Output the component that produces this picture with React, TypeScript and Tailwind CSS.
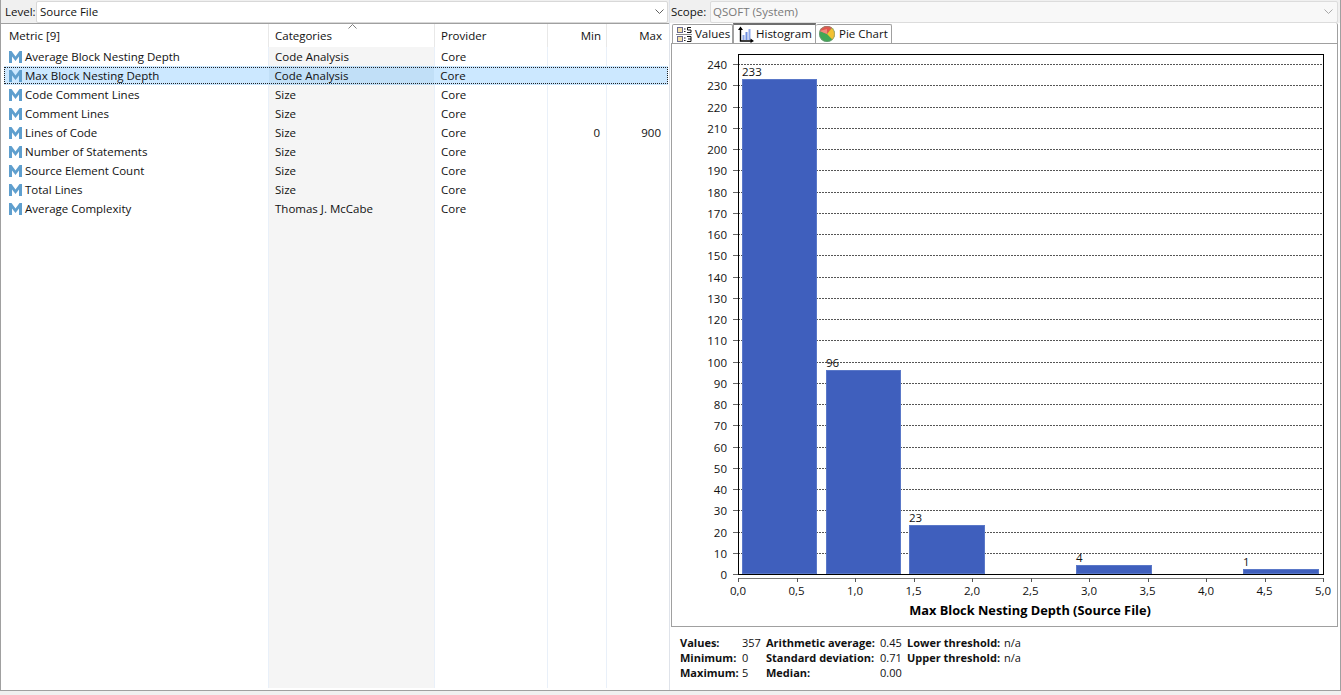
const font = "font-['Open_Sans','Liberation_Sans',sans-serif]";

const rows = [
  { name: "Average Block Nesting Depth", cat: "Code Analysis", min: "", max: "" },
  { name: "Max Block Nesting Depth", cat: "Code Analysis", min: "", max: "", selected: true },
  { name: "Code Comment Lines", cat: "Size", min: "", max: "" },
  { name: "Comment Lines", cat: "Size", min: "", max: "" },
  { name: "Lines of Code", cat: "Size", min: "0", max: "900" },
  { name: "Number of Statements", cat: "Size", min: "", max: "" },
  { name: "Source Element Count", cat: "Size", min: "", max: "" },
  { name: "Total Lines", cat: "Size", min: "", max: "" },
  { name: "Average Complexity", cat: "Thomas J. McCabe", min: "", max: "" },
];

function Chevron({ color = "#606060" }: { color?: string }) {
  return (
    <svg width="9" height="5" viewBox="0 0 9 5" fill="none">
      <path d="M0.5 0.5 L4.5 4.5 L8.5 0.5" stroke={color} />
    </svg>
  );
}

function MetricIcon() {
  return (
    <svg width="13" height="12" viewBox="0 0 13 12" className="shrink-0">
      <path d="M0 12 V0 H2.5 L6.5 5.5 L10.5 0 H13 V12 H10 V5.5 L6.5 10 L3 5.5 V12 Z" fill="#5f9fce" />
    </svg>
  );
}

function ValuesIcon() {
  return (
    <svg width="16" height="17" viewBox="0 0 16 17" className="shrink-0">
      <rect x="1.5" y="1.5" width="5" height="5" fill="#f6e3a8" stroke="#6a6a90" />
      <rect x="1.5" y="10.5" width="5" height="5" fill="#f6e3a8" stroke="#6a6a90" />
      <path d="M0 8.5 H16" stroke="#8a8a8a" />
      <path d="M8 3 H9.5 M8 5.5 H9.5 M8 12 H9.5 M8 14.5 H9.5" stroke="#222" />
      <path d="M15 1.5 H11.5 V4 H15 V6.5 H11" stroke="#111" fill="none" />
      <path d="M11 10.5 H15 V15.5 H11 M12 13 H15" stroke="#111" fill="none" />
    </svg>
  );
}

function HistogramIcon() {
  return (
    <svg width="17" height="17" viewBox="0 0 17 17" className="shrink-0">
      <rect x="5.5" y="9" width="2" height="5" fill="#8fa8e8" />
      <rect x="8.5" y="6" width="2" height="8" fill="#6f8fe0" />
      <rect x="11.5" y="3" width="2" height="11" fill="#8fa8e8" />
      <path d="M3.5 2 V15 H15" stroke="#000" strokeWidth="1.4" fill="none" />
      <path d="M1 4 L3.5 0.5 L6 4 Z M13.5 12.5 L17 15 L13.5 17 Z" fill="#000" />
    </svg>
  );
}

function PieIcon() {
  return (
    <svg width="16" height="16" viewBox="0 0 16 16" className="shrink-0">
      <circle cx="8" cy="8" r="8" fill="#3fa855" />
      <path d="M8 8 L0.6 5 A8 8 0 0 1 13 1.8 Z" fill="#e2574c" />
      <path d="M8 8 L13 1.8 A8 8 0 0 1 13.5 13.8 Z" fill="#f2c230" />
      <path d="M8 8 L0.6 5 L8 3 Z" fill="#f08a7c" />
      <circle cx="8" cy="8" r="7.5" fill="none" stroke="#8a8a8a" strokeOpacity="0.5" />
    </svg>
  );
}

// plot area coordinates, relative to the svg
const W = 665;
const plotL = 66;
const plotR = 651;
const plotT = 10;
const plotB = 530;
const yFor = (v: number) => plotB - (v * 510) / 240;
const xFor = (v: number) => plotL + (v * (plotR - plotL)) / 5;

const bars = [
  { x: 70, w: 75, top: 35, label: "233" },
  { x: 154, w: 75, top: 326, label: "96" },
  { x: 237, w: 76, top: 481, label: "23" },
  { x: 404, w: 76, top: 521, label: "4" },
  { x: 571, w: 76, top: 525, label: "1" },
];

const ticksY = Array.from({ length: 25 }, (_, i) => i * 10);
const ticksX = ["0,0", "0,5", "1,0", "1,5", "2,0", "2,5", "3,0", "3,5", "4,0", "4,5", "5,0"];

function Histogram() {
  return (
    <svg width={W} height="582" viewBox={`0 0 ${W} 582`} fontFamily="'Open Sans', sans-serif">
      <g shapeRendering="crispEdges">
        {ticksY.map((t) => (
          <g key={t}>
            {t > 0 && (
              <line x1={plotL} x2={plotR} y1={Math.round(yFor(t)) + 0.5} y2={Math.round(yFor(t)) + 0.5} stroke="#555" strokeDasharray="2 1" />
            )}
            <line x1={plotL - 5} x2={plotL} y1={Math.round(yFor(t)) + 0.5} y2={Math.round(yFor(t)) + 0.5} stroke="#666" />
          </g>
        ))}
        {bars.map((b) => (
          <rect key={b.label} x={b.x + 0.5} y={b.top + 0.5} width={b.w - 1} height={plotB - b.top - 1} fill="#3f5fbd" stroke="#5a78c8" />
        ))}
        <rect x={plotL + 0.5} y={plotT + 0.5} width={plotR - plotL} height={plotB - plotT} fill="none" stroke="#000" />
        <line x1={plotL} x2={plotR + 1} y1={plotB + 4.5} y2={plotB + 4.5} stroke="#777" />
        {ticksX.map((t, i) => (
          <line key={t} x1={Math.round(xFor(i * 0.5)) + 0.5} x2={Math.round(xFor(i * 0.5)) + 0.5} y1={plotB + 4} y2={plotB + 8} stroke="#555" />
        ))}
      </g>
      {ticksY.map((t) => (
        <text key={t} x={plotL - 11} y={yFor(t) + 5} textAnchor="end" fontSize="11.5" fill="#111">{t}</text>
      ))}
      {bars.map((b) => (
        <text key={b.label} x={b.x} y={b.top - 3} fontSize="11.5" fill="#111">{b.label}</text>
      ))}
      {ticksX.map((t, i) => (
        <text key={t} x={xFor(i * 0.5)} y={plotB + 21} textAnchor="middle" fontSize="11.5" fill="#111">{t}</text>
      ))}
      <text x={358} y={plotB + 41} textAnchor="middle" fontSize="12.8" fontWeight="bold" fill="#000">
        Max Block Nesting Depth (Source File)
      </text>
    </svg>
  );
}

function Cell({ className = "", children }: { className?: string; children?: React.ReactNode }) {
  return <div className={`flex h-full items-center overflow-hidden whitespace-nowrap ${className}`}>{children}</div>;
}

export default function App() {
  return (
    <div className={`${font} flex h-[695px] w-[1341px] flex-col overflow-hidden bg-[#f0f0f0] text-[11.5px] text-[#111]`}>
      <div className="flex h-[691px] shrink-0 border-r border-b border-l border-[#a0a0a0] bg-white">
        {/* left side */}
        <div className="flex w-[668px] shrink-0 flex-col">
          <div className="flex h-[23px] shrink-0 items-center bg-[#f0f0f0] pr-[1px] pl-[4px]">
            <span className="w-[31px]">Level:</span>
            <div className="flex h-[22px] flex-1 items-center justify-between rounded-[2px] border border-[#d8d8d8] bg-white pr-[3px] pl-[3px]">
              <span>Source File</span>
              <Chevron />
            </div>
          </div>
          <div className="flex h-[24px] shrink-0 items-center border-t border-[#a0a0a0]">
            <Cell className="w-[268px] border-r border-[#e8e8e8] pl-[8px]">Metric [9]</Cell>
            <Cell className="relative w-[166px] border-r border-[#e8e8e8] pl-[6px]">
              Categories
              <svg width="9" height="5" viewBox="0 0 9 5" fill="none" className="absolute top-0 left-[79px]">
                <path d="M0.5 4.5 L4.5 0.5 L8.5 4.5" stroke="#808080" />
              </svg>
            </Cell>
            <Cell className="w-[113px] border-r border-[#e8e8e8] pl-[6px]">Provider</Cell>
            <Cell className="w-[59px] justify-end border-r border-[#e8e8e8] pr-[5px]">Min</Cell>
            <Cell className="w-[62px] justify-end pr-[7px]">Max</Cell>
          </div>
          <div className="relative min-h-0 flex-1">
            {/* column tints run the full height */}
            <div className="flex h-[641px]">
              <div className="w-[268px] border-r border-[#e9f0f9]" />
              <div className="w-[166px] border-r border-[#e9f0f9] bg-[#f5f5f5]" />
              <div className="w-[113px] border-r border-[#e9f0f9]" />
              <div className="w-[59px] border-r border-[#e9f0f9]" />
            </div>
            <div className="absolute inset-x-0 top-0">
              {rows.map((r) => (
                <div
                  key={r.name}
                  className={`relative flex h-[19px] items-center ${r.selected ? "mr-[1px] ml-[3px] bg-[#cce8ff]" : ""}`}
                >
                  {r.selected && (
                    <div className="absolute inset-x-0 inset-y-[1px] border border-dotted border-[#222]" />
                  )}
                  <Cell className={`gap-[3px] ${r.selected ? "w-[265px] pl-[5px]" : "w-[268px] pl-[8px]"}`}>
                    <MetricIcon />
                    <span>{r.name}</span>
                  </Cell>
                  <Cell className={`w-[166px] pl-[6px] ${r.selected ? "bg-[#c1dff7]" : ""}`}>{r.cat}</Cell>
                  <Cell className="w-[113px] pl-[6px]">Core</Cell>
                  <Cell className="w-[59px] justify-end pr-[7px]">{r.min}</Cell>
                  <Cell className="w-[62px] justify-end pr-[8px]">{r.max}</Cell>
                </div>
              ))}
            </div>
          </div>
        </div>
        <div className="w-[1px] shrink-0 bg-[#dfe3ea]" />
        {/* right side */}
        <div className="flex min-w-0 flex-1 flex-col bg-white">
          <div className="flex h-[23px] shrink-0 items-center bg-[#f0f0f0] pr-[2px] pl-[1px]">
            <span className="w-[39px]">Scope:</span>
            <div className="flex h-[22px] flex-1 items-center justify-between rounded-[2px] border border-[#dcdcdc] bg-[#f8f8f8] pr-[4px] pl-[2px] text-[#7a7a7a]">
              <span>QSOFT (System)</span>
              <Chevron color="#a8a8a8" />
            </div>
          </div>
          <div className="ml-[1px] flex h-[20px] w-[667px] shrink-0 items-end rounded-tr-[2px] border-r border-[#a0a0a0] bg-white pl-[1px]">
            <div className="flex h-[19px] w-[61px] items-center gap-[3px] rounded-t-[2px] border border-b-0 border-[#a0a0a0] bg-white pl-[3px] whitespace-nowrap">
              <ValuesIcon />
              Values
            </div>
            <div className="flex h-[20px] w-[83px] items-center gap-[2px] border-x border-t-2 border-[#a0a0a0] border-t-[#6e6e6e] bg-white pl-[3px] whitespace-nowrap">
              <HistogramIcon />
              Histogram
            </div>
            <div className="flex h-[19px] w-[76px] items-center gap-[4px] rounded-t-[2px] border border-b-0 border-l-0 border-[#a0a0a0] bg-white pl-[3px] whitespace-nowrap">
              <PieIcon />
              Pie Chart
            </div>
          </div>
          <div className="ml-[1px] h-[584px] w-[667px] shrink-0 border border-[#a0a0a0] bg-white">
            <Histogram />
          </div>
          <div className="grid grid-cols-[62px_24px_114px_27px_97px_auto] pt-[8px] pl-[10px] text-[11px] leading-[15px] whitespace-nowrap">
            <b>Values:</b><span>357</span>
            <b>Arithmetic average:</b><span>0.45</span>
            <b>Lower threshold:</b><span>n/a</span>
            <b>Minimum:</b><span>0</span>
            <b>Standard deviation:</b><span>0.71</span>
            <b>Upper threshold:</b><span>n/a</span>
            <b>Maximum:</b><span>5</span>
            <b>Median:</b><span>0.00</span>
          </div>
        </div>
      </div>
    </div>
  );
}
